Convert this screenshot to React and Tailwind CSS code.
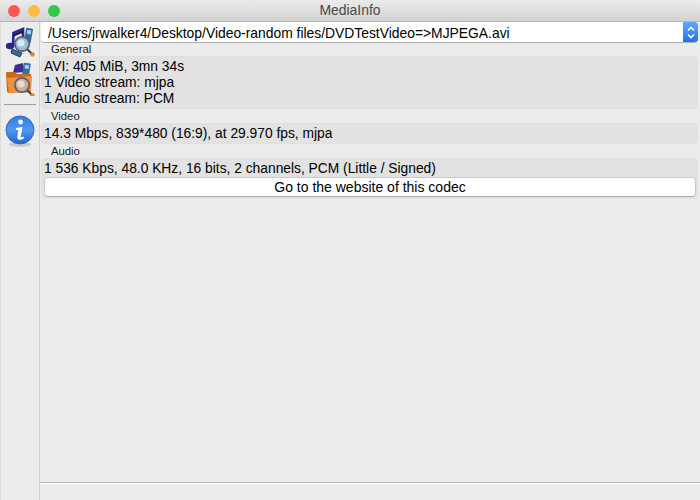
import React from 'react';

const Magnifier = ({ cx, cy, glass, shine }) => (
  <g>
    <path d={`M${cx + 5} ${cy + 5} L${cx + 10} ${cy + 10}`} stroke="#3a3a3a" strokeWidth="2" />
    <circle cx={cx + 10.5} cy={cy + 10.5} r="2.3" fill="#d68a2e" />
    <circle cx={cx} cy={cy} r="7.2" fill={glass} stroke="#5b6470" strokeWidth="1.8" />
    <circle cx={cx - 1} cy={cy - 1} r="3.6" fill={shine} />
  </g>
);

const MusicIcon = () => (
  <svg width="32" height="32" viewBox="0 0 32 32">
    <path d="M9 19 L9.5 7 L19 3 L19 14" fill="none" stroke="#2b2596" strokeWidth="2.6" />
    <path d="M9.5 9.5 L19 5.5" stroke="#15114f" strokeWidth="2" />
    <ellipse cx="6" cy="20" rx="4.2" ry="3.2" fill="#2a2490" />
    <rect x="21" y="2" width="7" height="15" rx="1" fill="#2f6a9f" transform="rotate(10 24 9)" />
    <rect x="22.5" y="4" width="4" height="4" fill="#a8d4f0" transform="rotate(10 24 9)" />
    <path d="M8 23 L18 27 L16 31 L7 27 Z" fill="#2f6f9f" stroke="#10283c" strokeWidth="0.8" />
    <Magnifier cx={18} cy={18} glass="#9fbcd8" shine="#dbe9f5" />
  </svg>
);

const FolderIcon = () => (
  <svg width="32" height="34" viewBox="0 0 32 34">
    <path d="M9 11 L11 3 L19 1 L21 10 Z" fill="#3a2f8f" />
    <rect x="19" y="1" width="7" height="12" rx="1" fill="#3a6ea5" transform="rotate(10 22 7)" />
    <rect x="20.5" y="3" width="4" height="3.5" fill="#a8d4f0" transform="rotate(10 22 7)" />
    <path d="M2 10 L11 10 L13 12 L27 12 L27 30 L5 31 Q3 31 3 29 Z" fill="#c9691f" />
    <path d="M3 16 L28 14 L27 30 L5 31 Z" fill="#ee9240" />
    <Magnifier cx={18} cy={23} glass="#c9b09b" shine="#e8ddd2" />
  </svg>
);

const InfoIcon = () => (
  <svg width="30" height="33" viewBox="0 0 30 33">
    <defs>
      <linearGradient id="infoBlue" x1="0" y1="0" x2="0" y2="1">
        <stop offset="0" stopColor="#2f7fe6" />
        <stop offset="0.5" stopColor="#4f97ee" />
        <stop offset="1" stopColor="#2465d2" />
      </linearGradient>
    </defs>
    <ellipse cx="15" cy="29.5" rx="11" ry="2.5" fill="#c8c8c8" />
    <circle cx="15" cy="15" r="14" fill="url(#infoBlue)" stroke="#2a5aa8" strokeWidth="0.8" />
    <circle cx="15.5" cy="7" r="2.4" fill="#fff" />
    <path d="M11 13 L17.5 12 L15.8 21.5 Q15.8 23 19 21.5 L18.5 24 Q12.5 26 12.2 22.5 L13.4 15 L11 15 Z" fill="#fff" />
  </svg>
);

const GroupBox = ({ title, children, className }) => (
  <div>
    <div className="h-[14px] pl-[10px] text-[11.3px] leading-[14px] text-[#1a1a1a]">{title}</div>
    <div className={`rounded-[4px] border border-[#e0e0e0] bg-[#e2e2e2] pl-[2px] pr-px ${className}`}>
      {children}
    </div>
  </div>
);

export default function App() {
  return (
    <div className="flex h-[500px] w-[700px] flex-col overflow-hidden bg-[#ececec] text-[13.8px] text-black" style={{ fontFamily: '"Liberation Sans", Arial, sans-serif' }}>
      {/* Title bar */}
      <div className="relative flex h-[22px] shrink-0 items-center justify-center rounded-t-[5px] border-b border-[#b4b4b4] bg-gradient-to-b from-[#ebebeb] to-[#d3d3d3]">
        <div className="absolute left-2 top-[5px] flex gap-2">
          <span className="h-3 w-3 rounded-full bg-[#fc5753]" />
          <span className="h-3 w-3 rounded-full bg-[#fdbc40]" />
          <span className="h-3 w-3 rounded-full bg-[#33c748]" />
        </div>
        <span className="text-[13.9px] text-[#4a4a4a]">MediaInfo</span>
      </div>

      <div className="flex min-h-0 flex-1">
        {/* Toolbar */}
        <div className="flex w-[40px] shrink-0 flex-col items-center border-x border-l-[#dcdcdc] border-r-[#d0d0d0] bg-[#ececec]">
          <div className="mt-[4px] h-[32px]"><MusicIcon /></div>
          <div className="mt-[4px] h-[34px]"><FolderIcon /></div>
          <div className="mt-[8px] h-px w-[32px] bg-[#9a9a9a]" />
          <div className="mt-[10px]"><InfoIcon /></div>
        </div>

        {/* Main */}
        <div className="flex min-w-0 flex-1 flex-col">
          <div className="flex-1 pl-px pr-[2px]">
            <div className="flex h-[21px] items-center overflow-hidden rounded-[4px] border-b border-[#b0b0b0] bg-white">
              <span className="flex-1 pl-[7px] pt-px text-[13.86px] leading-[20px]">/Users/jrwalker4/Desktop/Video-random files/DVDTestVideo=&gt;MJPEGA.avi</span>
              <span className="flex h-[21px] w-[15px] items-center justify-center bg-gradient-to-b from-[#5fa8fb] to-[#1a6ff2]">
                <svg width="10" height="15" viewBox="0 0 10 15" fill="none" stroke="#fff" strokeWidth="1.6">
                  <path d="M2 5.5 L5 2.5 L8 5.5" />
                  <path d="M2 9.5 L5 12.5 L8 9.5" />
                </svg>
              </span>
            </div>

            <div className="mt-[-1px]">
              <GroupBox title="General" className="h-[53px] leading-[16px]">
                <div className="pt-[2px]">
                  <div>AVI: 405 MiB, 3mn 34s</div>
                  <div>1 Video stream: mjpa</div>
                  <div>1 Audio stream: PCM</div>
                </div>
              </GroupBox>
              <GroupBox title="Video" className="h-[21px] leading-[19px]">
                <div>14.3 Mbps, 839*480 (16:9), at 29.970 fps, mjpa</div>
              </GroupBox>
              <GroupBox title="Audio" className="h-[41px] leading-[19px]">
                <div>1 536 Kbps, 48.0 KHz, 16 bits, 2 channels, PCM (Little / Signed)</div>
                <button className="mt-[-1px] block h-[20px] w-full rounded-[4px] border border-[#c8c8c8] border-b-[#a8a8a8] bg-white text-center text-[14px] leading-[17px] text-black">
                  Go to the website of this codec
                </button>
              </GroupBox>
            </div>
          </div>

          {/* Status bar */}
          <div className="h-[18px] shrink-0 border-t border-[#b8b8b8]">
            <div className="h-px bg-white" />
          </div>
        </div>
      </div>
    </div>
  );
}
